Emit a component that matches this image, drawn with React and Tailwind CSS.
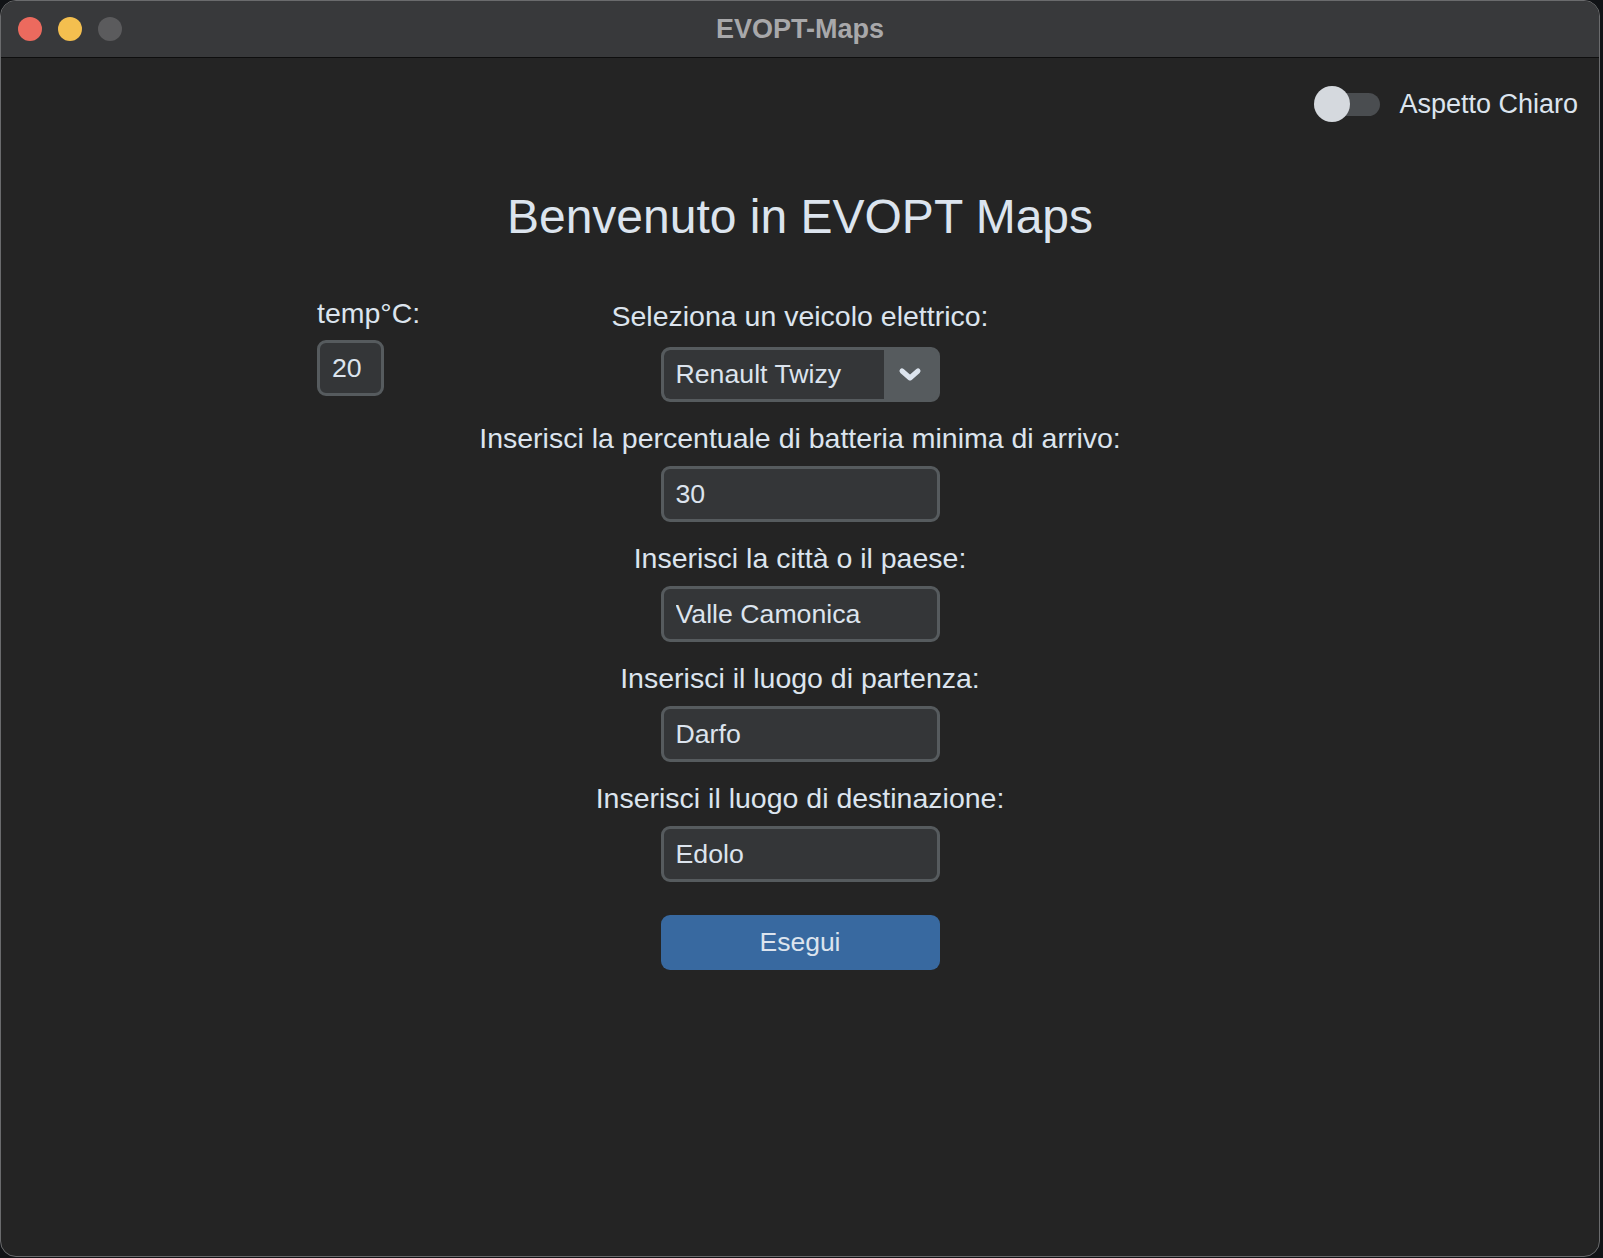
import React from "react";

const FONT = "font-['Liberation_Sans',Arial,sans-serif]";

/**
 * macOS style traffic light buttons
 */
const TrafficLights = () => (
  <div className="flex items-center gap-[16px] pl-[17px]">
    <span className="w-[24px] h-[24px] rounded-full bg-[#ec6a5e]" />
    <span className="w-[24px] h-[24px] rounded-full bg-[#f4bf4f]" />
    <span className="w-[24px] h-[24px] rounded-full bg-[#5b5b5d]" />
  </div>
);

const Label = ({ children, className = "" }) => (
  <div className={`h-[34px] leading-[34px] text-[28.5px] text-[#dce4ee] whitespace-nowrap ${className}`}>
    {children}
  </div>
);

const Field = ({ value, width = "w-[279px]", className = "" }) => (
  <input
    defaultValue={value}
    className={`${width} h-[56px] rounded-[9px] border-[3px] border-[#565b5e] bg-[#343638] pl-[12px] text-[26.7px] text-[#dce4ee] outline-none ${className}`}
  />
);

const ComboBox = ({ value }) => (
  <div className="mt-[14px] flex h-[55px] w-[279px] overflow-hidden rounded-[9px] border-[3px] border-[#565b5e] bg-[#565b5e]">
    <div className="flex flex-1 items-center rounded-l-[6px] bg-[#343638] pl-[12px] text-[26.7px] text-[#dce4ee]">
      {value}
    </div>
    <div className="flex w-[53px] items-center justify-center">
      <svg width="26" height="16" viewBox="0 0 26 16" fill="none">
        <polyline
          points="5,4 13,11 21,4"
          stroke="#dce4ee"
          strokeWidth="5"
          strokeLinecap="round"
          strokeLinejoin="round"
        />
      </svg>
    </div>
  </div>
);

const Toggle = ({ label }) => (
  <div className="flex items-center self-end mr-[21px] mt-[28px] h-[36px]">
    <div className="relative h-[23px] w-[66px] rounded-full bg-[#4a4d50]">
      <span className="absolute left-0 top-[-6.5px] h-[36px] w-[36px] rounded-full bg-[#d5d9de]" />
    </div>
    <span className="ml-[19px] text-[27px] text-[#dce4ee]">{label}</span>
  </div>
);

export default function App() {
  const rows = [
    { label: "Inserisci la percentuale di batteria minima di arrivo:", value: "30" },
    { label: "Inserisci la città o il paese:", value: "Valle Camonica" },
    { label: "Inserisci il luogo di partenza:", value: "Darfo" },
    { label: "Inserisci il luogo di destinazione:", value: "Edolo" },
  ];

  return (
    <div className={`w-[1603px] h-[1258px] bg-[#111316] ${FONT}`}>
      <div className="flex h-[1257px] w-[1600px] flex-col overflow-hidden rounded-[16px] border border-[#6a6b6d] bg-[#242424]">
        {/* title bar */}
        <div className="relative flex h-[57px] shrink-0 items-center border-b border-[#0e0e0e] bg-[#38393b]">
          <TrafficLights />
          <div className="absolute inset-0 flex items-center justify-center text-[27px] font-bold text-[#a8a8aa]">
            EVOPT-Maps
          </div>
        </div>

        <div className="flex flex-1 flex-col">
          <Toggle label="Aspetto Chiaro" />

          <h1 className="mt-[71px] text-center text-[48px] leading-none text-[#dce4ee]">
            Benvenuto in EVOPT Maps
          </h1>

          <div className="mt-[55px] grid grid-cols-[1fr_auto_1fr] items-start">
            <div className="flex flex-col items-start pl-[316px]">
              <Label>temp°C:</Label>
              <Field value="20" width="w-[67px]" className="mt-[10px]" />
            </div>

            <div className="flex flex-col items-center pt-[3px]">
              <Label>Seleziona un veicolo elettrico:</Label>
              <ComboBox value="Renault Twizy" />
              {rows.map((r) => (
                <React.Fragment key={r.label}>
                  <Label className="mt-[19px]">{r.label}</Label>
                  <Field value={r.value} className="mt-[11px]" />
                </React.Fragment>
              ))}
              <button className="mt-[33px] h-[55px] w-[279px] rounded-[9px] bg-[#3869a0] text-[26.5px] text-[#dce4ee]">
                Esegui
              </button>
            </div>

            <div />
          </div>
        </div>
      </div>
    </div>
  );
}
